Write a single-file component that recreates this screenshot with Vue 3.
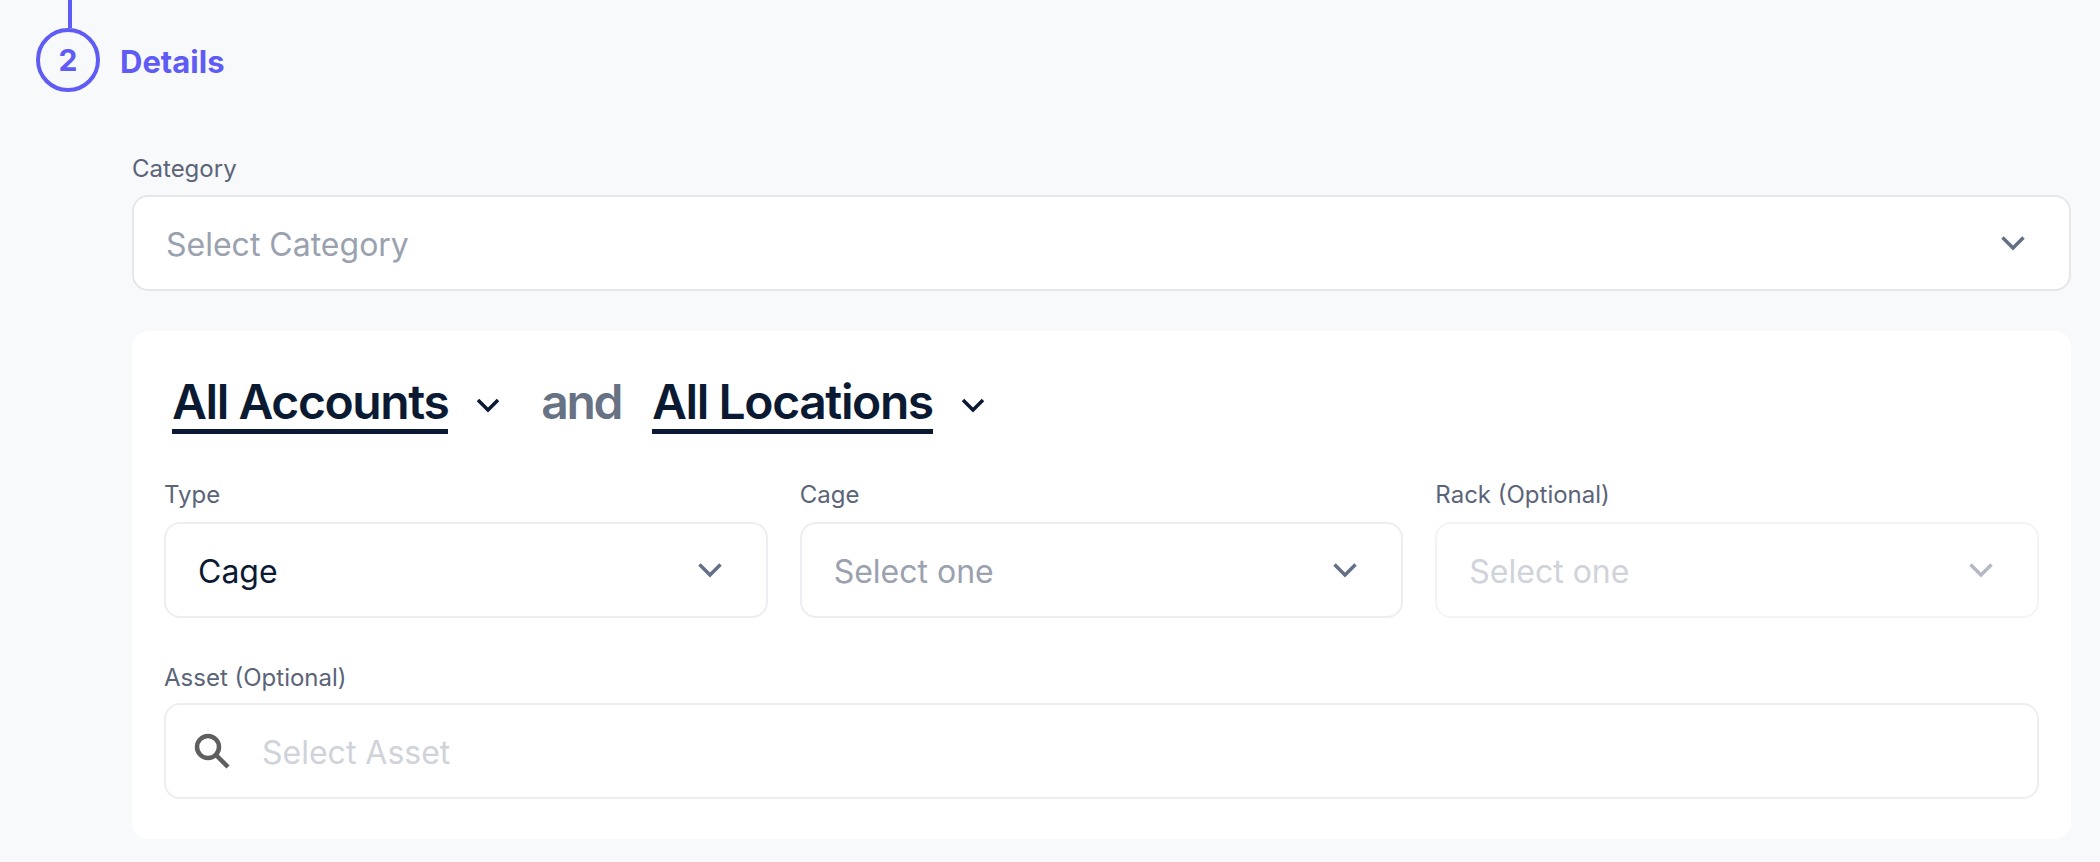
<script setup>
const fields = [
  { label: 'Type', value: 'Cage', state: 'filled' },
  { label: 'Cage', value: 'Select one', state: 'placeholder' },
  { label: 'Rack (Optional)', value: 'Select one', state: 'disabled' }
];
</script>

<template>
  <div class="page">
    <div class="stem"></div>
    <div class="step-head">
      <div class="step-circle">2</div>
      <span class="step-title">Details</span>
    </div>

    <div class="step-body">
      <label class="field-label">Category</label>
      <div class="select-box category">
        <span class="placeholder">Select Category</span>
        <svg class="chevron" viewBox="0 0 24 15"><path d="M1.5 1.5L12 12 22.5 1.5" /></svg>
      </div>

      <div class="card">
        <div class="filter-line">
          <span class="filter-link">All Accounts</span>
          <svg class="filter-chevron" viewBox="0 0 24 15"><path d="M2 2l10 10L22 2" /></svg>
          <span class="filter-and">and</span>
          <span class="filter-link">All Locations</span>
          <svg class="filter-chevron" viewBox="0 0 24 15"><path d="M2 2l10 10L22 2" /></svg>
        </div>

        <div class="field-grid">
          <div v-for="field in fields" :key="field.label" class="field">
            <label class="field-label">{{ field.label }}</label>
            <div class="select-box" :class="field.state">
              <span>{{ field.value }}</span>
              <svg class="chevron" viewBox="0 0 24 15"><path d="M1.5 1.5L12 12 22.5 1.5" /></svg>
            </div>
          </div>
        </div>

        <label class="field-label asset-label">Asset (Optional)</label>
        <div class="select-box asset">
          <svg class="search-icon" viewBox="0 0 36 36">
            <circle cx="14" cy="14" r="11" />
            <path d="M22 22l12 12" />
          </svg>
          <span>Select Asset</span>
        </div>
      </div>
    </div>
  </div>
</template>

<style scoped>
.page {
  height: 862px;
  overflow: hidden;
  background-color: #f8f9fb;
  font-family: Inter, "Liberation Sans", sans-serif;
}

.stem {
  width: 4px;
  height: 28px;
  margin-left: 68px;
  background-color: #5f5bf5;
}

.step-head {
  display: flex;
  align-items: center;
  gap: 20px;
  margin-left: 36px;
}

.step-circle {
  width: 64px;
  height: 64px;
  box-sizing: border-box;
  display: flex;
  align-items: center;
  justify-content: center;
  border: 4px solid #5f5bf5;
  border-radius: 50%;
  color: #5f5bf5;
  font-size: 30px;
  font-weight: 700;
}

.step-title {
  padding-top: 3px;
  color: #5f5bf5;
  font-size: 31px;
  font-weight: 700;
}

.step-body {
  margin: 60px 29px 0 132px;
}

.field-label {
  display: block;
  height: 43px;
  line-height: 34px;
  color: #5b6478;
  font-size: 24px;
}

.select-box {
  height: 96px;
  box-sizing: border-box;
  display: flex;
  align-items: center;
  justify-content: space-between;
  padding: 0 44px 0 32px;
  background-color: #fff;
  border: 2px solid #eceef1;
  border-radius: 16px;
  font-size: 32px;
}

.select-box span {
  padding-top: 2px;
}

.category {
  margin-bottom: 40px;
  border-color: #e5e7eb;
}

.placeholder span,
.placeholder {
  color: #9aa1af;
}

.filled {
  color: #0b1a33;
}

.disabled {
  color: #d0d3da;
  border-color: #f3f4f6;
}

.chevron {
  width: 24px;
  height: 15px;
  fill: none;
  stroke: #667085;
  stroke-width: 3.5;
}

.disabled .chevron {
  stroke: #b4b9c3;
}

.card {
  height: 508px;
  box-sizing: border-box;
  padding: 40px 32px 0;
  background-color: #fff;
  border-radius: 16px;
}

.filter-line {
  display: flex;
  align-items: center;
  height: 69px;
  padding-left: 8px;
}

.filter-link {
  padding-bottom: 2px;
  border-bottom: 5px solid #0b1a33;
  color: #0b1a33;
  font-size: 48px;
  font-weight: 600;
  line-height: 50px;
  letter-spacing: -1.4px;
}

.filter-chevron {
  width: 24px;
  height: 15px;
  margin: 0 41px 0 28px;
  fill: none;
  stroke: #0b1a33;
  stroke-width: 3.5;
}

.filter-and {
  margin-right: 31px;
  padding-bottom: 7px;
  color: #687285;
  font-size: 48px;
  font-weight: 600;
  line-height: 50px;
  letter-spacing: -2.4px;
}

.field-grid {
  display: grid;
  grid-template-columns: repeat(3, 1fr);
  gap: 32px;
  margin: 38px 0 43px;
}

.field .field-label {
  height: 44px;
}

.asset-label {
  height: 42px;
}

.asset {
  justify-content: flex-start;
  gap: 32px;
  padding-left: 28px;
  color: #d0d3da;
}

.search-icon {
  width: 36px;
  height: 36px;
  fill: none;
  stroke: #5f5f5f;
  stroke-width: 4.5;
}
</style>
